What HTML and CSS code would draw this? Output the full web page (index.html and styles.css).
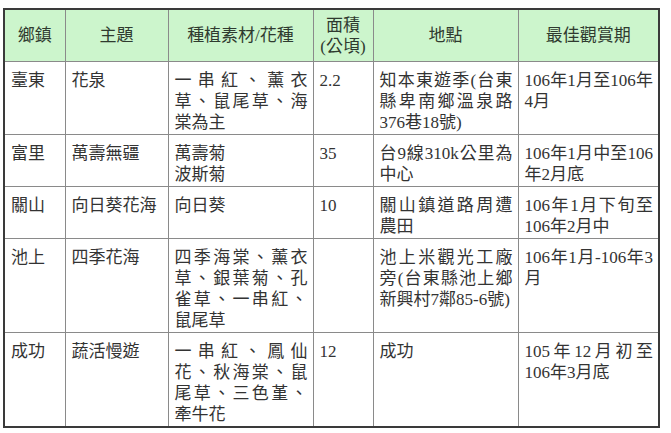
FILE: index.html
```html
<!DOCTYPE html>
<html lang="zh-Hant">
<head>
<meta charset="utf-8">
<title>花海</title>
<link rel="stylesheet" href="styles.css">
</head>
<body>
<div class="page">
<table class="flower-table">
  <colgroup>
    <col class="c-town">
    <col class="c-theme">
    <col class="c-plant">
    <col class="c-area">
    <col class="c-place">
    <col class="c-period">
  </colgroup>
  <thead>
    <tr class="head-row">
      <th>鄉鎮</th>
      <th>主題</th>
      <th>種植素材/花種</th>
      <th>面積<br>(公頃)</th>
      <th>地點</th>
      <th>最佳觀賞期</th>
    </tr>
  </thead>
  <tbody>
    <tr>
      <td>臺東</td>
      <td>花泉</td>
      <td class="just">一串紅、薰衣草、鼠尾草、海棠為主</td>
      <td>2.2</td>
      <td class="just">知本東遊季(台東縣卑南鄉溫泉路376巷18號)</td>
      <td class="just">106年1月至106年4月</td>
    </tr>
    <tr>
      <td>富里</td>
      <td>萬壽無疆</td>
      <td>萬壽菊<br>波斯菊</td>
      <td>35</td>
      <td class="just">台9線310k公里為中心</td>
      <td class="just">106年1月中至106年2月底</td>
    </tr>
    <tr>
      <td>關山</td>
      <td>向日葵花海</td>
      <td>向日葵</td>
      <td>10</td>
      <td class="just">關山鎮道路周遭農田</td>
      <td class="just">106年1月下旬至106年2月中</td>
    </tr>
    <tr>
      <td>池上</td>
      <td>四季花海</td>
      <td class="just">四季海棠、薰衣草、銀葉菊、孔雀草、一串紅、鼠尾草</td>
      <td></td>
      <td class="just">池上米觀光工廠旁(台東縣池上鄉新興村7鄰85-6號)</td>
      <td class="just">106年1月-106年3月</td>
    </tr>
    <tr>
      <td>成功</td>
      <td>蔬活慢遊</td>
      <td class="just">一串紅、鳳仙花、秋海棠、鼠尾草、三色堇、牽牛花</td>
      <td>12</td>
      <td class="just">成功</td>
      <td class="just">105年12月初至106年3月底</td>
    </tr>
  </tbody>
</table>
</div>
</body>
</html>
```

FILE: styles.css
```css
html, body {
  margin: 0;
  padding: 0;
  background: #ffffff;
}

.page {
  padding: 8px 0 0 3px;
}

.flower-table {
  border-collapse: collapse;
  table-layout: fixed;
  width: 657px;
  border: 2px solid #3a3a3a;
  font-family: "Liberation Serif", "Noto Sans CJK TC", serif;
  font-size: 17px;
  line-height: 21px;
  color: #333333;
}

.c-town { width: 61px; }
.c-theme { width: 103px; }
.c-plant { width: 145px; }
.c-area { width: 60px; }
.c-place { width: 145px; }
.c-period { width: 141px; }

.flower-table th,
.flower-table td {
  border: 1px solid #8a8a8a;
  padding: 8px 5px 1px 6px;
  vertical-align: top;
  text-align: left;
  word-break: normal;
}

.flower-table th {
  background: #ccf5cc;
  color: #2f3a2f;
  font-weight: normal;
  text-align: center;
  vertical-align: middle;
  height: 43px;
  padding: 4px 2px;
}

.flower-table td.just {
  text-align: justify;
}
```
